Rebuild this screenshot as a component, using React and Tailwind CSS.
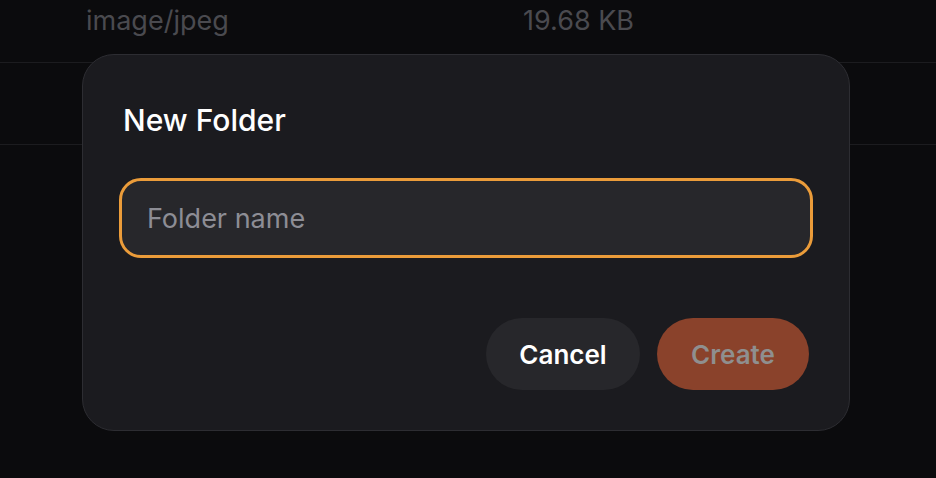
import { useState } from 'react';

function FileRows() {
  return (
    <div className="absolute inset-0">
      <div className="h-[82px] -mt-[19px] border-b border-[#1c1c1f] flex items-center">
        <span className="w-[523px] pl-[86px] text-[27px] text-[#4a4a4f]">image/jpeg</span>
        <span className="text-[27px] text-[#4a4a4f]">19.68 KB</span>
      </div>
      <div className="h-[82px] border-b border-[#1c1c1f]" />
    </div>
  );
}

function NewFolderDialog() {
  const [name, setName] = useState('');

  return (
    <div className="relative w-[768px] rounded-[32px] bg-[#1b1b1f] border border-[#2d2d32] px-10 pt-[45px] pb-[40px]">
      <h2 className="text-[30px] leading-[40px] font-medium text-white">New Folder</h2>
      <div className="-mx-1 mt-[38px]">
        <input
          value={name}
          onChange={(e) => setName(e.target.value)}
          placeholder="Folder name"
          className="w-full h-[80px] rounded-[22px] border-[3px] border-[#eb9c3a] bg-[#27272b] pl-[25px] text-[27px] text-white placeholder:text-[#8d8d95] outline-none"
        />
      </div>
      <div className="mt-[60px] flex justify-end gap-[17px]">
        <button className="h-[72px] w-[154px] rounded-full bg-[#27272b] text-[26px] font-semibold text-white">
          Cancel
        </button>
        <button
          disabled={!name}
          className="h-[72px] w-[152px] rounded-full bg-[#8a422b] text-[26px] font-semibold text-[#8f8f8f]"
        >
          Create
        </button>
      </div>
    </div>
  );
}

export default function App() {
  return (
    <div
      className="relative w-[936px] h-[478px] overflow-hidden bg-[#0b0b0d]"
      style={{ fontFamily: 'Inter, "Noto Sans", sans-serif' }}
    >
      <FileRows />
      <div className="absolute inset-0 flex items-start justify-center pt-[54px]">
        <div className="mr-[4px]">
          <NewFolderDialog />
        </div>
      </div>
    </div>
  );
}
